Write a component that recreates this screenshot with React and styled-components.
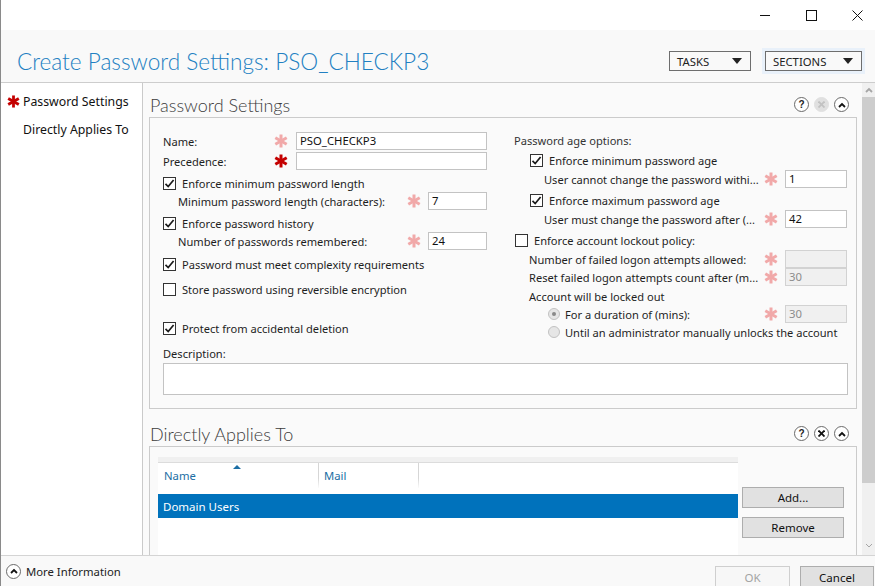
import React from "react";
import styled, { createGlobalStyle } from "styled-components";

const UI = `"Noto Sans", "Open Sans", "DejaVu Sans", sans-serif`;
const LIGHT = `"Lato", "Noto Sans", sans-serif`;

const GlobalStyle = createGlobalStyle`
  html, body {
    margin: 0;
    padding: 0;
    background: #fff;
  }
  body {
    font-family: ${UI};
    font-size: 11.1px;
    color: #1e1e1e;
  }
  * {
    box-sizing: border-box;
  }
`;

const Window = styled.div`
  position: relative;
  width: 875px;
  height: 586px;
  display: flex;
  flex-direction: column;
  overflow: hidden;
  border-left: 1px solid #8a8a8a;
  background: #fff;

  &::before {
    content: "";
    position: absolute;
    left: -1px;
    top: 20px;
    width: 1px;
    height: 26px;
    background: #1f4b66;
  }
`;

const TitleBar = styled.div`
  height: 30px;
  flex: none;
  display: flex;
  justify-content: flex-end;
  margin-right: -5px;
`;

const WinButton = styled.div`
  width: 46px;
  height: 30px;
  display: flex;
  align-items: center;
  justify-content: center;
`;

const Header = styled.div`
  height: 53px;
  flex: none;
  display: flex;
  align-items: center;
  padding: 19px 13px 9px 16px;
  background: #f9f9f9;
  border-bottom: 1px solid #cdcdcd;
`;

const PageTitle = styled.div`
  font-family: ${LIGHT};
  font-weight: 300;
  font-size: 22.6px;
  color: #2280c2;
  white-space: nowrap;
`;

const Spacer = styled.div`
  flex: 1;
`;

const MenuButton = styled.div`
  width: ${(p) => p.$w}px;
  height: 20px;
  margin-left: ${(p) => p.$ml || 0}px;
  display: flex;
  align-items: center;
  justify-content: space-between;
  padding: 0 8px 0 7px;
  border: 1px solid #6e6e6e;
  font-size: 11.3px;
  color: #222;
  box-shadow: ${(p) => (p.$focus ? "0 0 0 3px #e9f1fa" : "none")};
`;

const Body = styled.div`
  flex: 1;
  min-height: 0;
  display: flex;
`;

const Sidebar = styled.div`
  width: 142px;
  flex: none;
  padding-top: 4px;
  background: #fff;
  border-right: 1px solid #cacaca;
`;

const NavItem = styled.div`
  height: 28px;
  display: flex;
  align-items: center;
  font-size: 12.3px;
  color: #111;
  white-space: nowrap;
`;

const NavMark = styled.div`
  width: 22px;
  flex: none;
  display: flex;
  justify-content: center;
  padding-left: 2px;
`;

const Main = styled.div`
  flex: 1;
  min-width: 0;
  display: flex;
  background: #fafafa;
`;

const Content = styled.div`
  flex: 1;
  min-width: 0;
  overflow: hidden;
  padding: 9px 5px 0 6px;
`;

const SectionHead = styled.div`
  height: 25px;
  margin-top: ${(p) => p.$mt || 0}px;
  display: flex;
  align-items: center;
  justify-content: space-between;
  padding: 0 8px 0 1px;
`;

const SectionTitle = styled.div`
  font-family: ${LIGHT};
  font-weight: 300;
  font-size: 18px;
  color: #3c3c3c;
`;

const IconGroup = styled.div`
  display: flex;
  gap: 5px;
`;

const CircleIcon = styled.div`
  width: 15px;
  height: 15px;
  border-radius: 50%;
  display: flex;
  align-items: center;
  justify-content: center;
  border: 1px solid ${(p) => (p.$off ? "#e0e0e0" : "#6a6a6a")};
  background: ${(p) => (p.$off ? "#e0e0e0" : "#fff")};
  font-family: "Liberation Sans", sans-serif;
  font-size: 10px;
  font-weight: bold;
  color: #222;
`;

const Panel = styled.div`
  border: 1px solid #cbcbcb;
  background: #fafafa;
  padding: ${(p) => p.$pad};
  display: ${(p) => (p.$flex ? "flex" : "block")};
  align-items: flex-start;
  height: ${(p) => (p.$h ? `${p.$h}px` : "auto")};
`;

const FormGrid = styled.div`
  display: grid;
  grid-template-columns: 324px 333px;
  column-gap: 27px;
  align-items: start;
`;

const Column = styled.div`
  display: flex;
  flex-direction: column;
  padding-top: ${(p) => p.$top || 0}px;
`;

const Row = styled.div`
  height: ${(p) => p.$h || 18}px;
  margin-top: ${(p) => p.$mt || 0}px;
  padding-left: ${(p) => p.$indent || 0}px;
  display: flex;
  align-items: center;
  white-space: nowrap;
  color: ${(p) => (p.$muted ? "#333" : "#1e1e1e")};
`;

const Label = styled.div`
  flex: 1;
  min-width: 0;
  overflow: hidden;
`;

const StarSlot = styled.div`
  width: 16px;
  flex: none;
  display: flex;
  justify-content: center;
`;

const Field = styled.div`
  width: ${(p) => p.$w}px;
  height: 18px;
  flex: none;
  margin-left: ${(p) => p.$ml || 6}px;
  padding-left: 3px;
  line-height: 16px;
  font-size: 11.3px;
  border: 1px solid ${(p) => (p.$disabled ? "#d2d2d2" : "#c3c3c3")};
  background: ${(p) => (p.$disabled ? "#f0f0f0" : "#fff")};
  color: ${(p) => (p.$disabled ? "#8c8c8c" : "#111")};
`;

const Box = styled.div`
  width: 13px;
  height: 13px;
  flex: none;
  margin-right: 6px;
  border: 1px solid #333;
  background: #fff;
  display: flex;
  align-items: center;
  justify-content: center;
`;

const Radio = styled.div`
  width: 12px;
  height: 12px;
  flex: none;
  margin-right: 5px;
  border-radius: 50%;
  border: 1px solid #c2c2c2;
  background: #e6e6e6;
  display: flex;
  align-items: center;
  justify-content: center;

  &::after {
    content: "";
    width: 4px;
    height: 4px;
    border-radius: 50%;
    background: ${(p) => (p.$on ? "#8a8a8a" : "transparent")};
  }
`;

const DescLabel = styled.div`
  margin-top: 5px;
  height: 16px;
  line-height: 16px;
`;

const TextArea = styled.div`
  margin-top: 1px;
  height: 32px;
  border: 1px solid #c3c3c3;
  background: #fff;
`;

const Table = styled.div`
  width: 580px;
  height: 140px;
  flex: none;
  background: #fff;
  display: flex;
  flex-direction: column;
`;

const TableStrip = styled.div`
  height: 6px;
  background: #f0f0f0;
  border-bottom: 1px solid #dcdcdc;
`;

const HeadRow = styled.div`
  height: 25px;
  display: flex;
`;

const HeadCell = styled.div`
  position: relative;
  width: ${(p) => p.$w}px;
  padding-left: ${(p) => p.$pl}px;
  display: flex;
  align-items: center;
  color: #1c6ea4;
  font-size: 11.3px;
  border-right: 1px solid transparent;
  border-image: linear-gradient(#d6d6d6, #d6d6d6 60%, #ffffff) 1;
`;

const SortArrow = styled.div`
  position: absolute;
  left: 75px;
  top: 2px;
  width: 0;
  height: 0;
  border-left: 4px solid transparent;
  border-right: 4px solid transparent;
  border-bottom: 4px solid #1c6ea4;
`;

const SelectedRow = styled.div`
  height: 24px;
  margin-top: 6px;
  padding-left: 5px;
  display: flex;
  align-items: center;
  background: #0072bc;
  color: #fff;
  font-size: 11.5px;
`;

const SideButtons = styled.div`
  margin-left: 4px;
  padding-top: 30px;
  display: flex;
  flex-direction: column;
  gap: 9px;
`;

const PushButton = styled.div`
  width: ${(p) => p.$w || 102}px;
  height: ${(p) => p.$h || 21}px;
  margin-left: ${(p) => p.$ml || 0}px;
  margin-top: ${(p) => p.$mt || 0}px;
  align-self: ${(p) => (p.$mt ? "flex-start" : "auto")};
  display: flex;
  align-items: center;
  justify-content: center;
  font-size: 11.5px;
  border: 1px solid ${(p) => (p.$disabled ? "#cfcfcf" : "#adadad")};
  background: ${(p) => (p.$disabled ? "#f7f7f7" : "#e1e1e1")};
  color: ${(p) => (p.$disabled ? "#a3a3a3" : "#111")};
`;

const Scrollbar = styled.div`
  width: 13px;
  flex: none;
  display: flex;
  flex-direction: column;
  background: #f0f0f0;
  padding-bottom: 2px;
`;

const ScrollArrow = styled.div`
  height: 14px;
  display: flex;
  align-items: center;
  justify-content: center;
`;

const Thumb = styled.div`
  height: 386px;
  background: #cdcdcd;
`;

const Track = styled.div`
  flex: 1;
`;

const Footer = styled.div`
  height: 31px;
  flex: none;
  display: flex;
  align-items: center;
  padding: 0 1px 0 5px;
  background: #f9f9f9;
  border-top: 1px solid #d4d4d4;
`;

const MoreInfo = styled.div`
  display: flex;
  align-items: center;
  gap: 5px;
  font-size: 11.3px;
  color: #222;
`;

const Asterisk = ({ color, size = 14 }) => (
  <svg width={size} height={size} viewBox="0 0 14 14">
    <g stroke={color} strokeWidth="3">
      <line x1="7" y1="0.5" x2="7" y2="13.5" />
      <line x1="1.3" y1="3.7" x2="12.7" y2="10.3" />
      <line x1="1.3" y1="10.3" x2="12.7" y2="3.7" />
    </g>
  </svg>
);

const PINK = "#f1a9a9";
const RED = "#c40000";

const Check = ({ on }) => (
  <Box>
    {on && (
      <svg width="11" height="11" viewBox="0 0 11 11">
        <polyline points="1.5,5.8 4.2,8.5 9.6,2" fill="none" stroke="#1a1a1a" strokeWidth="1.7" />
      </svg>
    )}
  </Box>
);

const Chevron = ({ color = "#111", w = 8 }) => (
  <svg width={w} height="6" viewBox="0 0 8 6">
    <polyline points="1,5 4,2 7,5" fill="none" stroke={color} strokeWidth="1.8" />
  </svg>
);

const DownTriangle = () => (
  <svg width="10" height="6" viewBox="0 0 10 6">
    <polygon points="0,0 10,0 5,6" fill="#222" />
  </svg>
);

const SectionIcons = ({ closeOff }) => (
  <IconGroup>
    <CircleIcon>?</CircleIcon>
    <CircleIcon $off={closeOff}>
      <svg width="7" height="7" viewBox="0 0 7 7">
        <g stroke={closeOff ? "#c2c2c2" : "#111"} strokeWidth="1.8">
          <line x1="0.5" y1="0.5" x2="6.5" y2="6.5" />
          <line x1="6.5" y1="0.5" x2="0.5" y2="6.5" />
        </g>
      </svg>
    </CircleIcon>
    <CircleIcon>
      <Chevron />
    </CircleIcon>
  </IconGroup>
);

const Required = ({ color = PINK }) => (
  <StarSlot>
    <Asterisk color={color} />
  </StarSlot>
);

export default function App() {
  return (
    <Window>
      <GlobalStyle />
      <TitleBar>
        <WinButton>
          <svg width="10" height="10" viewBox="0 0 10 10">
            <line x1="0" y1="5.5" x2="10" y2="5.5" stroke="#111" strokeWidth="1" />
          </svg>
        </WinButton>
        <WinButton>
          <svg width="11" height="11" viewBox="0 0 11 11">
            <rect x="0.5" y="0.5" width="10" height="10" fill="none" stroke="#111" strokeWidth="1" />
          </svg>
        </WinButton>
        <WinButton>
          <svg width="11" height="11" viewBox="0 0 11 11">
            <g stroke="#111" strokeWidth="1">
              <line x1="0.5" y1="0.5" x2="10.5" y2="10.5" />
              <line x1="10.5" y1="0.5" x2="0.5" y2="10.5" />
            </g>
          </svg>
        </WinButton>
      </TitleBar>

      <Header>
        <PageTitle>Create Password Settings: PSO_CHECKP3</PageTitle>
        <Spacer />
        <MenuButton $w={82}>
          TASKS
          <DownTriangle />
        </MenuButton>
        <MenuButton $w={97} $ml={14} $focus>
          SECTIONS
          <DownTriangle />
        </MenuButton>
      </Header>

      <Body>
        <Sidebar>
          <NavItem>
            <NavMark>
              <Asterisk color={RED} size={13} />
            </NavMark>
            Password Settings
          </NavItem>
          <NavItem>
            <NavMark />
            Directly Applies To
          </NavItem>
        </Sidebar>

        <Main>
          <Content>
            <SectionHead>
              <SectionTitle>Password Settings</SectionTitle>
              <SectionIcons closeOff />
            </SectionHead>
            <Panel $pad="12px 8px 13px 13px">
              <FormGrid>
                <Column $top={1}>
                  <Row $h={20}>
                    <Label>Name:</Label>
                    <Required />
                    <Field $w={191} $ml={7}>PSO_CHECKP3</Field>
                  </Row>
                  <Row $h={20}>
                    <Label>Precedence:</Label>
                    <Required color={RED} />
                    <Field $w={191} $ml={7} />
                  </Row>
                  <Row $mt={3}>
                    <Check on />
                    Enforce minimum password length
                  </Row>
                  <Row $indent={15}>
                    <Label>Minimum password length (characters):</Label>
                    <Required />
                    <Field $w={59}>7</Field>
                  </Row>
                  <Row $mt={4}>
                    <Check on />
                    Enforce password history
                  </Row>
                  <Row $indent={15}>
                    <Label>Number of passwords remembered:</Label>
                    <Required />
                    <Field $w={59}>24</Field>
                  </Row>
                  <Row $mt={5}>
                    <Check on />
                    Password must meet complexity requirements
                  </Row>
                  <Row $mt={7}>
                    <Check />
                    Store password using reversible encryption
                  </Row>
                  <Row $mt={21}>
                    <Check on />
                    Protect from accidental deletion
                  </Row>
                </Column>

                <Column>
                  <Row $h={20} $muted>
                    Password age options:
                  </Row>
                  <Row $h={20} $indent={16}>
                    <Check on />
                    Enforce minimum password age
                  </Row>
                  <Row $indent={30}>
                    <Label>User cannot change the password withi...</Label>
                    <Required />
                    <Field $w={62}>1</Field>
                  </Row>
                  <Row $h={20} $mt={2} $indent={16}>
                    <Check on />
                    Enforce maximum password age
                  </Row>
                  <Row $indent={30}>
                    <Label>User must change the password after (...</Label>
                    <Required />
                    <Field $w={62}>42</Field>
                  </Row>
                  <Row $h={20} $mt={2} $indent={1}>
                    <Check />
                    Enforce account lockout policy:
                  </Row>
                  <Row $indent={15}>
                    <Label>Number of failed logon attempts allowed:</Label>
                    <Required />
                    <Field $w={62} $disabled />
                  </Row>
                  <Row $indent={15}>
                    <Label>Reset failed logon attempts count after (m...</Label>
                    <Required />
                    <Field $w={62} $disabled>
                      30
                    </Field>
                  </Row>
                  <Row $mt={1} $indent={15}>
                    Account will be locked out
                  </Row>
                  <Row $indent={34}>
                    <Radio $on />
                    <Label>For a duration of (mins):</Label>
                    <Required />
                    <Field $w={62} $disabled>
                      30
                    </Field>
                  </Row>
                  <Row $indent={34}>
                    <Radio />
                    Until an administrator manually unlocks the account
                  </Row>
                </Column>
              </FormGrid>
              <DescLabel>Description:</DescLabel>
              <TextArea />
            </Panel>

            <SectionHead $mt={12}>
              <SectionTitle>Directly Applies To</SectionTitle>
              <SectionIcons />
            </SectionHead>
            <Panel $pad="10px 12px 0 8px" $flex $h={200}>
              <Table>
                <TableStrip />
                <HeadRow>
                  <HeadCell $w={161} $pl={6}>
                    Name
                    <SortArrow />
                  </HeadCell>
                  <HeadCell $w={100} $pl={5}>
                    Mail
                  </HeadCell>
                </HeadRow>
                <SelectedRow>Domain Users</SelectedRow>
              </Table>
              <SideButtons>
                <PushButton>Add...</PushButton>
                <PushButton>Remove</PushButton>
              </SideButtons>
            </Panel>
          </Content>

          <Scrollbar>
            <ScrollArrow>
              <Chevron color="#a6a6a6" w={8} />
            </ScrollArrow>
            <Thumb />
            <Track />
            <ScrollArrow>
              <svg width="8" height="6" viewBox="0 0 8 6">
                <polyline points="1,1 4,4 7,1" fill="none" stroke="#a6a6a6" strokeWidth="1" />
              </svg>
            </ScrollArrow>
          </Scrollbar>
        </Main>
      </Body>

      <Footer>
        <MoreInfo>
          <CircleIcon>
            <Chevron />
          </CircleIcon>
          More Information
        </MoreInfo>
        <Spacer />
        <PushButton $w={75} $h={22} $mt={10} $disabled>
          OK
        </PushButton>
        <PushButton $w={74} $h={22} $mt={10} $ml={10}>
          Cancel
        </PushButton>
      </Footer>
    </Window>
  );
}
